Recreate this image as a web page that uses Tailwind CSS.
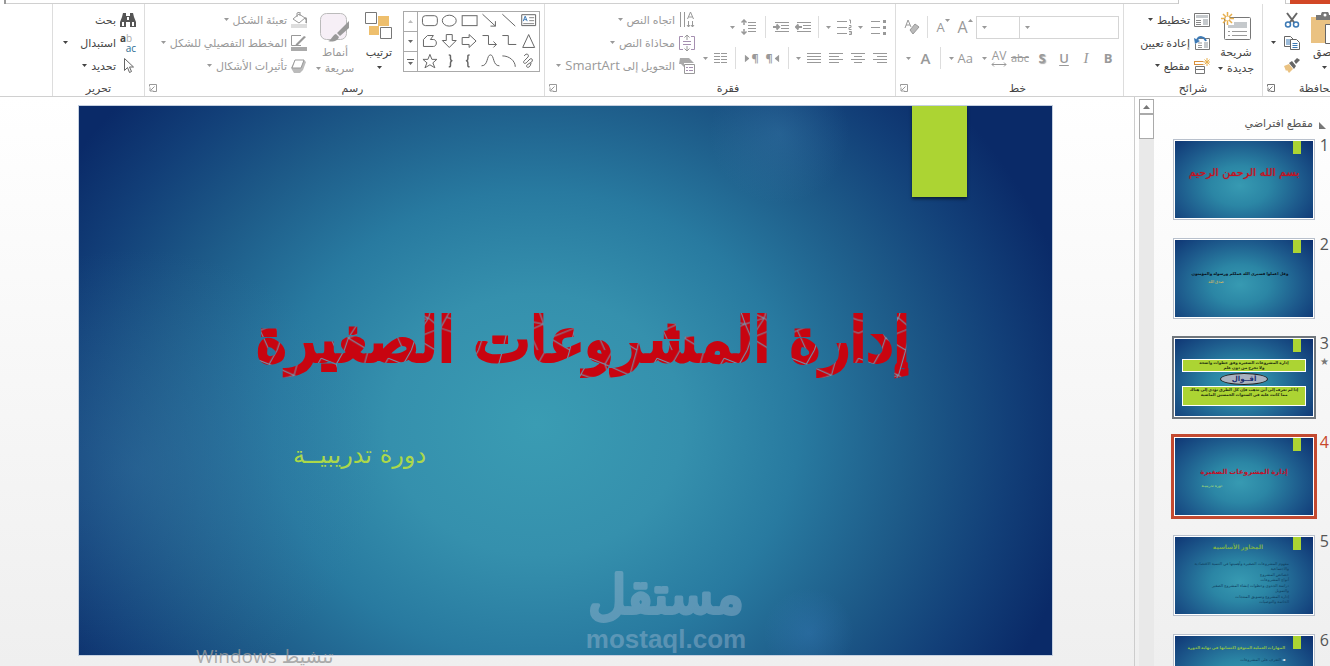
<!DOCTYPE html>
<html lang="ar" dir="rtl">
<head>
  <meta charset="UTF-8" />
  <meta name="viewport" content="width=device-width, initial-scale=1" />
  <title>إدارة المشروعات الصغيرة</title>
  <script src="https://cdn.jsdelivr.net/npm/@tailwindcss/browser@4"></script>
</head>
<body class="h-screen overflow-hidden flex flex-col bg-white text-[11px] leading-4 text-[#444] font-['Open_Sans','DejaVu_Sans',sans-serif]">

  <!-- Shared shapes -->
  <svg class="hidden">
    <symbol id="caret" viewBox="0 0 5 3"><path d="M0 0h5L2.5 3z" fill="currentColor"/></symbol>
    <symbol id="launcher" viewBox="0 0 8 8"><path d="M7.500 .5H.5M7.500 .5v7H4M.5 .5v2M5.500 2.500l-4 4M1 3.500v3.500h3.500" fill="none" stroke="currentColor"/></symbol>
  </svg>

  <!-- Tab strip -->
  <div class="flex h-1 shrink-0">
    <div class="w-10 bg-[#d24726]"></div>
    <div class="w-1 border-b border-[#d0d0d0]"></div>
    <div class="w-27 border-x border-[#c8c8c8]"></div>
    <div class="flex-1 border-b border-[#d0d0d0]"></div>
    <div class="w-1.5 border-r-2 border-[#999]"></div>
  </div>

  <!-- Ribbon -->
  <header class="flex h-[93px] shrink-0 border-b border-[#d0d0d0] bg-white overflow-hidden">

    <!-- Clipboard -->
    <section class="relative -mr-3 w-[79px] shrink-0 flex flex-col">
      <div class="flex-1 flex pt-1">
        <button class="w-9 flex flex-col items-center pt-1">
          <svg class="w-7 h-8 shrink-0" viewBox="2 0 28 32"><path d="M3 5h28v26H3z" fill="#eac282"/><path d="M8 3h5a4 4 0 0 1 8 0h5v5H8z" fill="#777"/><circle cx="17" cy="3" r="1.500" fill="#fff"/><path d="M17.500 12.500h17v19h-17z" fill="#fff" stroke="#666"/></svg>
          <span>لصق</span>
          <svg class="w-[5px] h-[3px] mt-1.5"><use href="#caret"/></svg>
        </button>
        <div class="flex flex-col">
          <button class="h-[23px] w-7 grid place-items-center" aria-label="قص">
            <svg class="w-4 h-4" viewBox="0 0 16 16" fill="none"><path d="M3 1l7.500 10M13 1L5.500 11" stroke="#666" stroke-width="2"/><circle cx="4" cy="12.500" r="2.500" stroke="#3d7ab5" stroke-width="1.500"/><circle cx="12" cy="12.500" r="2.500" stroke="#3d7ab5" stroke-width="1.500"/></svg>
          </button>
          <button class="h-[23px] w-9 flex items-center gap-2 pr-1.5" aria-label="نسخ">
            <svg class="w-4 h-4 shrink-0" viewBox="0 0 16 16" fill="#fff"><path d="M.5 1.500h6l3 3v7h-9z" stroke="#666"/><path d="M2 5h4M2 7h4M2 9h4" stroke="#3d7ab5"/><path d="M6.500 4.500h6l3 3v7h-9z" stroke="#666"/><path d="M8.500 8.500h5M8.500 10.500h5M8.500 12.500h5" stroke="#3d7ab5"/></svg>
            <svg class="w-[5px] h-[3px] shrink-0"><use href="#caret"/></svg>
          </button>
          <button class="h-[23px] w-7 grid place-items-center" aria-label="نسخ التنسيق">
            <svg class="w-4 h-4" viewBox="0 0 16 16"><path d="M0 8l5-2 4 5-4 4-2-3-1 1z" fill="#eac282"/><path d="M5 5l3-2 4 5-2 3zM10 3l3-3 3 2-4 4z" fill="#666"/></svg>
          </button>
        </div>
      </div>
      <div class="h-4 pr-1.5 leading-4">الحافظة</div>
      <svg class="absolute left-1 bottom-1 w-2 h-2 text-[#777]"><use href="#launcher"/></svg>
    </section>

    <!-- Slides -->
    <section class="w-[140px] shrink-0 flex flex-col border-x border-[#ddd]">
      <div class="flex-1 flex pt-1">
        <button class="w-13 flex flex-col items-center pt-1">
          <svg class="w-8 h-8 shrink-0" viewBox="0 0 32 32"><rect x="4.500" y="5.500" width="26" height="22" rx="1" fill="#fff" stroke="#777"/><path d="M14 10h13v6H8v-3h6z" fill="#c5c9cc"/><path d="M8 19.500h2M12 19.500h15M8 23.500h2M12 23.500h15" stroke="#999"/><path d="M7.500 0v13M1 6.500h13M3 2l9 9M12 2l-9 9" stroke="#e8b04f" stroke-width="1.500"/><circle cx="7.500" cy="6.500" r="2" fill="#fff"/></svg>
          <span>شريحة</span>
          <span class="flex items-center gap-1">جديدة <svg class="w-[5px] h-[3px]"><use href="#caret"/></svg></span>
        </button>
        <div class="flex flex-col items-start">
          <button class="h-[23px] flex items-center gap-1">
            <svg class="w-4 h-4" viewBox="0 0 16 16" fill="none"><path d="M.5 1.500h15v13H.5z" stroke="#777"/><path d="M2 3h12v3H2zM9 7h5v6H9z" fill="#c5c9cc"/><path d="M2 8.500h5M2 10.500h5M2 12.500h5" stroke="#888"/></svg>
            تخطيط <svg class="w-[5px] h-[3px]"><use href="#caret"/></svg>
          </button>
          <button class="h-[23px] flex items-center gap-1">
            <svg class="w-4 h-4" viewBox="0 0 16 16" fill="none"><path d="M4 3.500h11.500v11H1.500V9" stroke="#777"/><path d="M4 8h4M4 10.500h4M4 12.500h4" stroke="#999"/><path d="M10 7h4v6h-4z" fill="#c5c9cc"/><path d="M12 6C10 1 5 1 3 5" stroke="#3d7ab5" stroke-width="2"/><path d="M0 3l1 6 5-3z" fill="#3d7ab5"/></svg>
            إعادة تعيين
          </button>
          <button class="h-[23px] flex items-center gap-1">
            <svg class="w-4 h-4" viewBox="0 0 16 16" fill="none"><path d="M.5 3.500h9M.5 6.500h9M.5 3v4" stroke="#d9903a"/><path d="M13 0v8M9.500 4h7M10.500 1.500l5 5M15.500 1.500l-5 5" stroke="#e8b04f"/><path d="M1.500 8.500h9v7h-9z" stroke="#777"/><path d="M1.500 11.500h9" stroke="#777"/></svg>
            مقطع <svg class="w-[5px] h-[3px]"><use href="#caret"/></svg>
          </button>
        </div>
      </div>
      <div class="h-4 text-center leading-4">شرائح</div>
    </section>

    <!-- Font -->
    <section class="relative w-[228px] shrink-0 flex flex-col border-l border-[#ddd] text-[#999]">
      <div class="flex-1 flex flex-col gap-[7px] pt-[11px] pr-1">
        <div class="flex items-center h-6">
          <label class="relative w-25">
            <select aria-label="الخط" class="block appearance-none w-full h-[23px] border border-[#d5d5d5] bg-white" disabled></select>
            <svg class="absolute left-1.5 top-2.5 w-[5px] h-[3px]"><use href="#caret"/></svg>
          </label>
          <label class="relative w-[43px]">
            <select aria-label="حجم الخط" class="block appearance-none w-full h-[23px] border border-r-0 border-[#d5d5d5] bg-white" disabled></select>
            <svg class="absolute left-1.5 top-2.5 w-[5px] h-[3px]"><use href="#caret"/></svg>
          </label>
          <button class="w-[22px] flex justify-center text-base leading-4" dir="ltr" disabled>A<svg class="w-[5px] h-[3px] rotate-180"><use href="#caret"/></svg></button>
          <button class="w-[22px] flex justify-center text-[13px] leading-4" dir="ltr" disabled>A<svg class="w-[5px] h-[3px]"><use href="#caret"/></svg></button>
          <span class="w-px h-[22px] mx-1 bg-[#ddd]"></span>
          <button class="w-[22px] grid place-items-center" aria-label="مسح التنسيق" disabled>
            <svg class="w-4 h-4" viewBox="0 0 16 16" fill="none" stroke="currentColor"><path d="M1 9l3-8 3 7M2 6h4"/><path d="M6 11l5-6 4 3-6 7z" fill="#bbb"/></svg>
          </button>
        </div>
        <div class="flex items-center h-6 text-[13px]">
          <button class="w-[22px] font-bold" disabled>B</button>
          <button class="w-[22px] italic font-['Liberation_Serif',serif] text-[15px]" disabled>I</button>
          <button class="w-[22px] font-semibold underline underline-offset-2" disabled>U</button>
          <button class="w-[22px] font-bold text-shadow-[1px_1px_1px_#aaa]" disabled>S</button>
          <button class="w-[22px] text-[11px] line-through" disabled>abc</button>
          <button class="w-9 flex items-center gap-1 pr-0.5" disabled>
            <span class="flex flex-col items-center text-xs leading-3">AV<svg class="w-4 h-[5px]" viewBox="0 0 16 5" fill="none" stroke="currentColor"><path d="M1 2.500h14M3 .5l-2 2 2 2M13 .5l2 2-2 2"/></svg></span>
            <svg class="w-[5px] h-[3px] shrink-0"><use href="#caret"/></svg>
          </button>
          <button class="w-7 flex items-center gap-1" disabled>Aa<svg class="w-[5px] h-[3px] shrink-0"><use href="#caret"/></svg></button>
          <span class="w-px h-[22px] mx-1 bg-[#ddd]"></span>
          <button class="w-9 flex items-center justify-center gap-2.5 font-semibold text-[15px]" disabled>A<svg class="w-[5px] h-[3px] shrink-0"><use href="#caret"/></svg></button>
        </div>
      </div>
      <div class="h-4 pl-4 text-center leading-4 text-[#444]">خط</div>
      <svg class="absolute left-1 bottom-1 w-2 h-2"><use href="#launcher"/></svg>
    </section>

    <!-- Paragraph -->
    <section class="relative w-[351px] shrink-0 flex flex-col border-l border-[#ddd] text-[#999]">
      <div class="flex-1 flex">
        <div class="w-[200px] flex flex-col gap-[7px] pt-[11px] pr-2">
          <div class="flex items-center h-6">
            <button class="w-[34px] flex items-center gap-2" aria-label="تعداد نقطي" disabled>
              <svg class="w-4 h-4" viewBox="0 0 16 16" stroke="currentColor"><path d="M0 2.500h9M0 8.500h9M0 14.500h9"/><path d="M12 2.500h3M12 8.500h3M12 14.500h3" stroke-width="3"/></svg>
              <svg class="w-[5px] h-[3px]"><use href="#caret"/></svg>
            </button>
            <button class="w-[30px] flex items-center gap-1.5" aria-label="تعداد رقمي" disabled>
              <svg class="w-4 h-4 shrink-0" viewBox="0 0 16 16" fill="none" stroke="currentColor"><path d="M0 2.500h10M0 8.500h10M0 14.500h10"/><path d="M12 1h1.500v3.500M12 6.500h2v2h-2v2h2.500M12 12.500h2.500v3H12M12.500 14h2" /></svg>
              <svg class="w-[5px] h-[3px] shrink-0"><use href="#caret"/></svg>
            </button>
            <span class="w-px h-[22px] mx-1 bg-[#ddd]"></span>
            <button class="w-[22px] grid place-items-center" aria-label="إنقاص المسافة البادئة" disabled>
              <svg class="w-4 h-3" viewBox="0 0 16 12" fill="none" stroke="currentColor"><path d="M2 1.500h14M8 4.500h8M8 7.500h8M2 10.500h14"/><path d="M7 6H1M3.500 3.500L1 6l2.500 2.500" stroke-width="2"/></svg>
            </button>
            <button class="w-[22px] grid place-items-center" aria-label="زيادة المسافة البادئة" disabled>
              <svg class="w-4 h-3" viewBox="0 0 16 12" fill="none" stroke="currentColor"><path d="M2 1.500h14M8 4.500h8M8 7.500h8M2 10.500h14"/><path d="M0 6h6M3.500 3.500L6 6 3.500 8.500" stroke-width="2"/></svg>
            </button>
            <span class="w-px h-[22px] mx-1 bg-[#ddd]"></span>
            <button class="flex items-center gap-1.5 pr-1" aria-label="تباعد الأسطر" disabled>
              <svg class="w-4 h-4" viewBox="0 0 16 16" fill="none" stroke="currentColor"><path d="M7 3.500h8M7 6.500h8M7 9.500h8M7 12.500h8"/><path d="M3 1v5M3 10v5M.5 3.500L3 1l2.500 2.500M.5 12.500L3 15l2.500-2.500" stroke-width="1.500"/></svg>
              <svg class="w-[5px] h-[3px]"><use href="#caret"/></svg>
            </button>
          </div>
          <div class="flex items-center h-6">
            <button class="w-[22px]" aria-label="محاذاة إلى اليمين" disabled><svg class="w-[14px] h-3" viewBox="0 0 14 12" stroke="currentColor"><path d="M0 1.500h14M4 4.500h10M0 7.500h14M4 10.500h10"/></svg></button>
            <button class="w-[22px]" aria-label="توسيط" disabled><svg class="w-[14px] h-3" viewBox="0 0 14 12" stroke="currentColor"><path d="M0 1.500h14M3 4.500h8M0 7.500h14M3 10.500h8"/></svg></button>
            <button class="w-[22px]" aria-label="محاذاة إلى اليسار" disabled><svg class="w-[14px] h-3" viewBox="0 0 14 12" stroke="currentColor"><path d="M0 1.500h14M0 4.500h10M0 7.500h14M0 10.500h10"/></svg></button>
            <button class="w-7 flex items-center gap-1.5" aria-label="ضبط" disabled>
              <svg class="w-[14px] h-3" viewBox="0 0 14 12" stroke="currentColor"><path d="M0 1.500h14M0 4.500h14M0 7.500h14M0 10.500h14"/></svg>
              <svg class="w-[5px] h-[3px]"><use href="#caret"/></svg>
            </button>
            <span class="w-px h-[22px] mx-1 bg-[#ddd]"></span>
            <button class="w-[22px] flex justify-center items-center font-bold" dir="ltr" disabled>¶<svg class="w-[8px] h-[5px] rotate-90"><use href="#caret"/></svg></button>
            <button class="w-[22px] flex justify-center items-center font-bold" dir="ltr" disabled><svg class="w-[8px] h-[5px] -rotate-90"><use href="#caret"/></svg>¶</button>
            <span class="w-px h-[22px] mx-1 bg-[#ddd]"></span>
            <button class="flex items-center gap-1.5 pr-1" aria-label="أعمدة" disabled>
              <svg class="w-[13px] h-3" viewBox="0 0 13 12" stroke="currentColor"><path d="M0 1.500h6M7 1.500h6M0 4.500h6M7 4.500h6M0 7.500h6M7 7.500h6M0 10.500h6M7 10.500h6"/></svg>
              <svg class="w-[5px] h-[3px]"><use href="#caret"/></svg>
            </button>
          </div>
        </div>
        <div class="flex flex-col items-start pt-1">
          <button class="h-[23px] flex items-center gap-1" disabled>
            <svg class="w-4 h-4" viewBox="0 0 16 16" fill="none" stroke="currentColor"><path d="M1.500 0v15M5.500 0v15M9.500 9v6M13.500 9v6M8.500 7l3-7 3 7M9.500 5h4M8 13l1.500 2 1.500-2M12 13l1.500 2 1.500-2"/></svg>
            اتجاه النص <svg class="w-[5px] h-[3px]"><use href="#caret"/></svg>
          </button>
          <button class="h-[23px] flex items-center gap-1" disabled>
            <svg class="w-4 h-4" viewBox="0 0 16 16" fill="none" stroke="currentColor"><path d="M4 1.500H.5v13H4M12 1.500h3.500v13H12" stroke="#a58fb0"/><path d="M8 0v5M8 11v5M5.500 2.500L8 0l2.500 2.500M5.500 13.500L8 16l2.500-2.500"/><path d="M4 6.500h8M4 9.500h8" stroke="#a58fb0"/></svg>
            محاذاة النص <svg class="w-[5px] h-[3px]"><use href="#caret"/></svg>
          </button>
          <button class="h-[23px] flex items-center gap-1" disabled>
            <svg class="w-4 h-4" viewBox="0 0 16 16"><path d="M1 0h9l5 5H5V9L2 6H0z" fill="#aaa"/><path d="M5.500 6.500h10v9h-10z" fill="#fff" stroke="#999"/><path d="M7 9.500h2M10 9.500h4M7 12.500h2M10 12.500h4" stroke="#a58fb0"/></svg>
            <span>التحويل إلى <span class="text-[13px]">SmartArt</span></span> <svg class="w-[5px] h-[3px]"><use href="#caret"/></svg>
          </button>
        </div>
      </div>
      <div class="h-4 pl-4 text-center leading-4 text-[#444]">فقرة</div>
      <svg class="absolute left-1 bottom-1 w-2 h-2"><use href="#launcher"/></svg>
    </section>

    <!-- Drawing -->
    <section class="relative w-[400px] shrink-0 flex flex-col border-l border-[#ddd] text-[#999]">
      <div class="flex-1 flex">
        <div class="mt-[7px] mr-1 w-[137px] h-[61px] flex border border-[#aaa] text-[#666]">
          <svg class="w-[122px] h-[59px]" viewBox="0 0 122 59" fill="none" stroke="currentColor" role="img" aria-label="أشكال">
            <rect x="4.500" y="3.500" width="15" height="10" rx="3"/>
            <ellipse cx="31.500" cy="8.500" rx="7" ry="5.500"/>
            <rect x="44.500" y="3.500" width="15" height="10"/>
            <path d="M65 2l13 12M78 9v5h-5M85 2l13 12"/>
            <path d="M104.500 2.500h14v11h-14z"/><path d="M112 5.500h5M112 8.500h5M106 11.500h11" stroke="#888"/><path d="M106 9l2-5 2 5M107 7.500h2" stroke="#3d7ab5"/>
            <path d="M5.500 34.500v-7l4-4h6l-3 4h3c4 0 4 7 0 7z"/>
            <path d="M28.500 22.500h6v6h4l-7 7-7-7h4z"/>
            <path d="M44.500 25.500h7v-3l7 6.500-7 6.500v-3h-7z"/>
            <path d="M65 23.500h6v9h8M76 29.500l3 3-3 3M85 23.500h6v9h8"/>
            <path d="M111.500 22.500l6 13h-12z"/>
            <path d="M12 42.500l2 5h5l-4 3.500 2 5-5-3-5 3 2-5-4-3.500h5z"/>
            <path d="M31 43c3 0 1 2 2 5l1 1-1 1c-1 3 1 5-2 5M52 43c-3 0-1 2-2 5l-1 1 1 1c1 3-1 5 2 5" stroke-width="1.500"/>
            <path d="M64 54c7 0 5-11 9-11s2 11 9 11M85 44c7 0 13 5 13 11"/>
            <path d="M107 44c2-3 5-2 4 1l-4 4c-2 2 1 4 3 1l3-3c3-1 3 3 0 4l-3 2c-2 2 1 4 3 1l1-3"/>
          </svg>
          <div class="w-[14px] flex flex-col divide-y divide-[#aaa] border-r border-[#aaa]">
            <button class="flex-1 grid place-items-center text-[#bbb]" aria-label="السابق"><svg class="w-[5px] h-[3px] rotate-180"><use href="#caret"/></svg></button>
            <button class="flex-1 grid place-items-center" aria-label="التالي"><svg class="w-[5px] h-[3px]"><use href="#caret"/></svg></button>
            <button class="flex-1 grid place-items-center" aria-label="المزيد"><svg class="w-[7px] h-[6px]" viewBox="0 0 7 6" fill="currentColor"><path d="M0 0h7v1H0zM1 3h5L3.500 6z"/></svg></button>
          </div>
        </div>
        <button class="w-12 pt-2 flex flex-col items-center text-[#444]">
          <svg class="w-7 h-7 shrink-0" viewBox="0 0 28 28"><path d="M13 4h11v10H13zM4 14h10v9H4z" fill="#eebf6d"/><path d="M.5 .5h11v11H.5zM15.500 15.500h11v11h-11z" fill="#fff" stroke="#777"/></svg>
          <span class="mt-1">ترتيب</span>
          <svg class="w-[5px] h-[3px] mt-1.5"><use href="#caret"/></svg>
        </button>
        <button class="w-11 -mr-0.5 pt-2 flex flex-col items-center" disabled>
          <svg class="w-8 h-8 shrink-0" viewBox="0 0 32 32"><rect x="1.500" y="1.500" width="26" height="26" rx="6" fill="#f6eff6" stroke="#bbb"/><path d="M30 9v7l-9 8-3-3zM17 22l3 3c-2 5-7 5-11 4 4-1 4-6 8-7z" fill="#999"/></svg>
          <span>أنماط</span>
          <span class="flex items-center gap-1">سريعة <svg class="w-[5px] h-[3px]"><use href="#caret"/></svg></span>
        </button>
        <div class="flex flex-col items-start pt-1 pr-1.5">
          <button class="h-[23px] flex items-center gap-1" disabled>
            <svg class="w-4 h-4" viewBox="0 0 16 16" fill="none" stroke="currentColor"><path d="M0 12h16v4H0z" fill="#ddd" stroke="none"/><path d="M2 7l6-5 6 4-6 5zM6 5V1l3-1v4"/><path d="M14 6c2 1 2 3 1 5" stroke-width="2"/></svg>
            تعبئة الشكل <svg class="w-[5px] h-[3px]"><use href="#caret"/></svg>
          </button>
          <button class="h-[23px] flex items-center gap-1" disabled>
            <svg class="w-4 h-4" viewBox="0 0 16 16" fill="none" stroke="currentColor"><path d="M0 12h16v4H0z" fill="#aaa" stroke="none"/><path d="M10 .5H.5v10H10"/><path d="M5 9l8-8 2 1-8 8-3 1z" fill="#999" stroke="none"/></svg>
            المخطط التفصيلي للشكل <svg class="w-[5px] h-[3px]"><use href="#caret"/></svg>
          </button>
          <button class="h-[23px] flex items-center gap-1" disabled>
            <svg class="w-4 h-4" viewBox="0 0 16 16"><path d="M4 2h9l2 2-3 8-3 3H3l-3-5z" fill="#bbb"/><path d="M4 2h9l-3 8H1z" fill="#fff" stroke="#999"/></svg>
            تأثيرات الأشكال <svg class="w-[5px] h-[3px]"><use href="#caret"/></svg>
          </button>
        </div>
      </div>
      <div class="h-4 pl-0 pr-0 text-center leading-4 text-[#444]"><span class="pl-4">رسم</span></div>
      <svg class="absolute left-1 bottom-1 w-2 h-2"><use href="#launcher"/></svg>
    </section>

    <!-- Editing -->
    <section class="w-[92px] shrink-0 flex flex-col border-l border-[#ddd]">
      <div class="flex-1 flex flex-col items-start pt-1 pr-2">
        <button class="h-[23px] flex items-center gap-1">
          <svg class="w-4 h-4" viewBox="0 0 16 16" fill="#555"><path d="M3 1h3v3h4V1h3l1 4 2 5v5h-6v-5H6v5H0v-5l2-5z"/><path d="M2 10h2v4H2zM12 10h2v4h-2zM7 5h2v3H7z" fill="#fff"/></svg>
          بحث
        </button>
        <button class="h-[23px] flex items-center gap-1">
          <span class="w-4 flex flex-col text-[10px] leading-[10px]" dir="ltr"><span class="text-left"><b>a</b><span class="text-[#aaa]">b</span></span><span class="text-right text-[#2b6c94]">ac</span></span>
          استبدال <svg class="w-[5px] h-[3px] mr-2"><use href="#caret"/></svg>
        </button>
        <button class="h-[23px] flex items-center gap-1">
          <svg class="w-4 h-4" viewBox="0 0 16 16" fill="#fff" stroke="#666"><path d="M4.500 .5v12l3-3 2 5 2-1-2-4.500h4z"/></svg>
          تحديد <svg class="w-[5px] h-[3px]"><use href="#caret"/></svg>
        </button>
      </div>
      <div class="h-4 text-center leading-4">تحرير</div>
    </section>
    <div class="flex-1"></div>
  </header>

  <main class="relative flex-1 min-h-0 flex bg-linear-to-b from-white to-[#efefef]">

    <!-- Slide list -->
    <aside class="w-[196px] shrink-0 flex border-l border-[#ccc] overflow-hidden">
      <div class="flex-1 pt-4">
        <h2 class="flex items-center gap-1.5 pr-1 h-5 text-[11px] text-[#555]">
          <svg class="w-[7px] h-[7px] mt-1" viewBox="0 0 7 7"><path d="M0 0v7h7z" fill="#777"/></svg>مقطع افتراضي
        </h2>
        <ol class="flex flex-col gap-[17px] pt-1.5 text-base leading-3 text-[#555]">
          <li class="flex h-[82px]">
            <span class="w-[15px] pr-px shrink-0">1</span>
            <a href="#s1" class="relative block w-[142px] h-[81px] border border-[#b8c0cc] p-px bg-white">
              <div class="relative h-full overflow-hidden text-center bg-[radial-gradient(ellipse_60%_75%_at_47%_58%,#379ab2_0%,#2b86a5_35%,#1d5a8c_75%,#0b2c6e_120%)]">
                <i class="absolute right-3 top-0 w-2 h-[13px] bg-[#acd433]"></i>
                <div class="pt-5 text-[11px] leading-6 font-['DejaVu_Sans',sans-serif] text-shadow-[0_0_1px_#b5202f] text-[#c5101f] whitespace-nowrap">بسم الله الرحمن الرحيم</div>
              </div>
            </a>
          </li>
          <li class="flex h-[82px]">
            <span class="w-[15px] pr-px shrink-0">2</span>
            <a href="#s2" class="relative block w-[142px] h-[81px] border border-[#b8c0cc] p-px bg-white">
              <div class="relative h-full overflow-hidden text-center bg-[radial-gradient(ellipse_60%_75%_at_47%_58%,#379ab2_0%,#2b86a5_35%,#1d5a8c_75%,#0b2c6e_120%)]">
                <i class="absolute right-3 top-0 w-2 h-[13px] bg-[#acd433]"></i>
                <div class="pt-7 pr-2 text-[4px] leading-3 font-bold text-[#081018] whitespace-nowrap">وقل اعملوا فسيرى الله عملكم ورسوله والمؤمنون</div>
                <div class="pr-14 text-[4px] leading-1 text-[#e8c050]">صدق الله</div>
              </div>
            </a>
          </li>
          <li class="flex h-[82px]">
            <span class="w-[15px] pr-px shrink-0">3<span class="block mt-1.5 text-[10px] leading-3 text-[#777]">★</span></span>
            <a href="#s3" class="relative block w-[140px] h-[79px] m-px ring-2 ring-[#6f767d] p-px bg-white">
              <div class="relative h-full overflow-hidden px-[7px] pt-5 flex flex-col items-center text-center text-[4px] leading-[5px] font-bold text-[#263010] bg-[radial-gradient(ellipse_60%_75%_at_47%_58%,#379ab2_0%,#2b86a5_35%,#1d5a8c_75%,#0b2c6e_120%)]">
                <i class="absolute right-3 top-0 w-2 h-[13px] bg-[#acd433]"></i>
                <p class="w-full h-[13px] shrink-0 border border-white bg-[#acd433]">إدارة المشروعات الصغيرة وفق خطوات واضحة<br>ولا تخرج من دون علم</p>
                <p class="w-12 h-3 my-px shrink-0 rounded-[50%] border border-[#222] bg-[#aab2c0] text-[7px] leading-[9px] text-[#1c2c70]">أقــوال</p>
                <p class="w-full h-5 shrink-0 border border-white bg-[#acd433]">إذا لم تعرف إلى أين تذهب فإن كل الطرق تؤدي إلى هناك<br>مما كانت عليه في السنوات الخمسين الماضية</p>
              </div>
            </a>
          </li>
          <li class="flex h-[82px] text-[#c8472b]">
            <span class="w-[15px] pr-px shrink-0">4</span>
            <a href="#s4" aria-current="true" class="relative block w-[140px] h-[79px] m-px ring-3 ring-[#c34a31] p-px bg-white">
              <div class="relative h-full overflow-hidden text-center bg-[radial-gradient(ellipse_60%_75%_at_47%_58%,#379ab2_0%,#2b86a5_35%,#1d5a8c_75%,#0b2c6e_120%)]">
                <i class="absolute right-3 top-0 w-2 h-[13px] bg-[#acd433]"></i>
                <div class="pt-7 text-[7px] leading-3 font-bold text-[#c01028] whitespace-nowrap">إدارة المشروعات الصغيرة</div>
                <div class="pr-16 pt-1 text-[4px] leading-2 text-[#b8e070]">دورة تدريبيـة</div>
              </div>
            </a>
          </li>
          <li class="flex h-[82px]">
            <span class="w-[15px] pr-px shrink-0">5</span>
            <a href="#s5" class="relative block w-[142px] h-[81px] border border-[#b8c0cc] p-px bg-white">
              <div class="relative h-full overflow-hidden pr-6 text-[4px] leading-[5px] text-[#0f3f60] bg-[radial-gradient(ellipse_60%_75%_at_47%_58%,#379ab2_0%,#2b86a5_35%,#1d5a8c_75%,#0b2c6e_120%)]">
                <i class="absolute right-3 top-0 w-2 h-[13px] bg-[#acd433]"></i>
                <div class="pt-1 pb-2 pl-3 text-center text-[6px] leading-3 font-bold text-[#7db04a]">المحاور الأساسية</div>
                <p>مفهوم المشروعات الصغيرة وأهميتها في التنمية الاقتصادية</p>
                <p>والاجتماعية</p>
                <p class="mt-px">خصائص المشروع</p>
                <p>أنواع المشروعات</p>
                <p class="mt-px">دراسة الجدوى وخطوات إنشاء المشروع الصغير</p>
                <p>والتمويل</p>
                <p class="mt-px">إدارة المشروع وتسويق المنتجات</p>
                <p>الخاتمة والتوصيات</p>
              </div>
            </a>
          </li>
          <li class="flex h-[82px]">
            <span class="w-[15px] pr-px shrink-0">6</span>
            <a href="#s6" class="relative block w-[142px] h-[81px] border border-[#b8c0cc] p-px bg-white">
              <div class="relative h-full overflow-hidden pr-7 text-[4px] text-[#0f3f60] bg-[radial-gradient(ellipse_60%_75%_at_47%_58%,#379ab2_0%,#2b86a5_35%,#1d5a8c_75%,#0b2c6e_120%)]">
                <i class="absolute right-3 top-0 w-2 h-[13px] bg-[#acd433]"></i>
                <div class="pt-1.5 text-[4px] leading-3 font-bold text-[#8dc04a] whitespace-nowrap">المهارات العملية المتوقع اكتسابها في نهاية الدورة</div>
                <p><span class="text-white">◄</span> التعرف على المشروعات</p>
              </div>
            </a>
          </li>
        </ol>
      </div>
      <!-- Scrollbar -->
      <div class="w-[15px] ml-1 mt-0.5 flex flex-col bg-[#e9e9e9]">
        <button class="h-[15px] grid place-items-center border border-[#aaa] bg-white text-[#777]" aria-label="أعلى"><svg class="w-[7px] h-1 rotate-180" viewBox="0 0 7 4"><path d="M0 0h7L3.500 4z" fill="currentColor"/></svg></button>
        <div class="h-[25px] border border-[#aaa] bg-white"></div>
      </div>
    </aside>

    <!-- Slide -->
    <div class="flex-1 min-w-0 pt-2 pr-[81px] pl-[78px]">
      <article class="relative w-full aspect-[975/551] border border-[#c5d0e0] overflow-hidden bg-[radial-gradient(circle_at_72%_5%,#4a90c040_0%,#4a90c000_8%),radial-gradient(circle_at_75%_96%,#3a80c055_0%,#3a80c000_5%),radial-gradient(ellipse_25%_40%_at_6%_66%,#3a78a860_0%,#3a78a800_100%),radial-gradient(ellipse_54%_85%_at_47%_58%,#3a9cb3_0%,#3590ad_28%,#287aa0_50%,#1d5a88_72%,#123f78_90%,#0a2a68_105%)]">
        <i class="absolute right-[85px] top-0 w-[55px] h-[91px] bg-[#acd433] shadow-[0_2px_3px_#0008]"></i>
        <h1 class="absolute left-[18%] top-[34%] w-[68%]">
          <svg class="block w-full overflow-visible" viewBox="0 0 660 110">
            <defs>
              <pattern id="cracks" width="67" height="57" patternUnits="userSpaceOnUse">
                <path d="M0 0h67v57H0z" fill="#c80410"/>
                <path d="M0 8l15 6 8-14M15 14l6 17L0 40M21 31l19-6 7-25M40 25l12 10 15-27M52 35l-5 22M52 35l15 5M21 31l6 14-4 12M27 45l20 12M27 45l13-20M15 14l25 11M6 37l9 20M52 35L27 45M58 24l9 3M0 27l21 4" fill="none" stroke="#6f97b0"/>
              </pattern>
            </defs>
            <text x="328" y="68" text-anchor="middle" direction="rtl" class="font-['DejaVu_Sans',sans-serif] text-[60px]" fill="url(#cracks)" stroke="url(#cracks)" stroke-width="4">إدارة المشروعات الصغيرة</text>
          </svg>
        </h1>
        <p class="absolute left-[22%] top-[60%] text-2xl leading-10 text-[#acd84a] font-['DejaVu_Sans',sans-serif] whitespace-nowrap">دورة تدريبيــة</p>
        <div class="absolute left-[52%] bottom-0 w-[162px] flex flex-col items-center opacity-40 text-[#a9bfd6]" dir="ltr">
          <svg class="w-full h-[54px] overflow-visible" viewBox="0 0 162 54"><text x="81" y="44" text-anchor="middle" class="font-['DejaVu_Sans',sans-serif] text-[52px]" fill="currentColor" stroke="currentColor" stroke-width="4" stroke-linejoin="round">مستقل</text></svg>
          <span class="text-[26px] leading-8 font-bold font-['Liberation_Sans',sans-serif]">mostaql.com</span>
        </div>
      </article>
    </div>

    <p class="absolute left-[196px] -bottom-1 text-[19px] leading-7 text-[#999]/80">تنشيط Windows</p>
  </main>

</body>
</html>
